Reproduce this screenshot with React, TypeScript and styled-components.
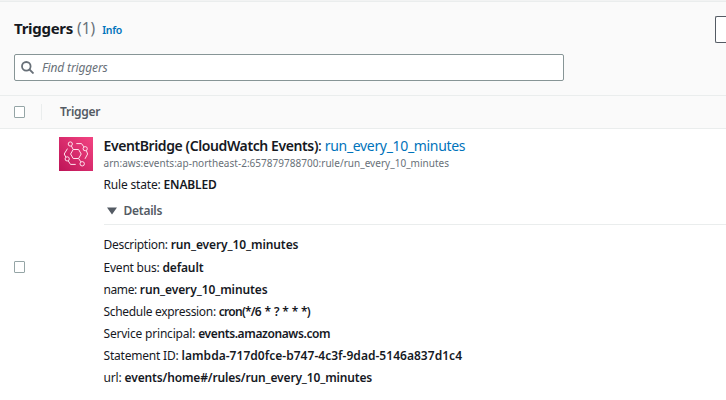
import React from 'react';
import styled, { createGlobalStyle } from 'styled-components';

const GlobalStyle = createGlobalStyle`
  * { box-sizing: border-box; }
  body { margin: 0; background: #fff; overflow: hidden; font-family: "Noto Sans", "Open Sans", sans-serif; font-size: 12px; color: #16191f; }
`;

const Page = styled.main`
  width: 726px;
  height: 400px;
  overflow: hidden;
  background: #fff;
`;

const Text = styled.span<{ $track?: number; $word?: number }>`
  letter-spacing: ${({ $track = 0 }) => $track}px;
  word-spacing: ${({ $word = 0 }) => $word}px;
  white-space: pre;
`;

const Header = styled.header`
  height: 96px;
  border-top: 1px solid #f2f3f3;
  border-bottom: 1px solid #eaeded;
  background: #fafafa;
  box-shadow: inset 0 1px 0 #eaeded;
  padding: 15px 0 0 14px;
`;

const TitleBar = styled.div`
  display: flex;
  justify-content: space-between;
  align-items: flex-start;
  height: 38px;
`;

const Heading = styled.h2`
  display: flex;
  align-items: baseline;
  margin: 0;
  font-size: 15px;
  line-height: 24px;
  font-weight: 700;
`;

const Counter = styled(Text)`
  margin-left: 4px;
  color: #687078;
  font-size: 15.5px;
  font-weight: 400;
`;

const InfoLink = styled(Text)`
  margin-left: 7px;
  color: #0073bb;
  font-size: 10.5px;
  font-weight: 600;
`;

const ActionButton = styled.button`
  width: 11px;
  height: 27px;
  padding: 0;
  border: 1px solid #545b64;
  border-right: 0;
  border-radius: 2px 0 0 2px;
  background: #fff;
`;

const SearchField = styled.div`
  display: flex;
  align-items: center;
  width: 550px;
  height: 27px;
  padding-left: 6px;
  gap: 8px;
  border: 1px solid #879596;
  border-radius: 2px;
  background: #fff;
  color: #687078;
  font-style: italic;
`;

const ColumnRow = styled.div`
  display: flex;
  align-items: center;
  height: 33px;
  padding-left: 14px;
  border-bottom: 1px solid #eaeded;
  background: #fafafa;
  color: #545b64;
  font-weight: 600;
`;

const ColumnLabel = styled(Text)`
  padding-bottom: 2px;
`;

const Checkbox = styled.span`
  flex: none;
  width: 11px;
  height: 12px;
  border: 1px solid #95a5a6;
  border-radius: 1px;
  background: #fff;
`;

const ColumnDivider = styled.span`
  width: 1px;
  height: 16px;
  margin: 0 18px 0 16px;
  background: #eaeded;
`;

const TriggerRow = styled.section`
  display: flex;
  height: 271px;
  padding: 8px 0 0 14px;
`;

const SelectCell = styled.div`
  width: 45px;
  padding-top: 124px;
  display: flex;
`;

const IconCell = styled.div`
  width: 44.5px;
  svg { display: block; }
`;

const Content = styled.div`
  flex: 1;
  min-width: 0;
`;

const Name = styled.div`
  font-size: 14px;
  line-height: 17px;
  height: 18px;
  white-space: nowrap;
  strong { font-weight: 600; }
  a { color: #0073bb; margin-left: 3px; }
`;

const Arn = styled.div`
  height: 18px;
  font-size: 10px;
  line-height: 17px;
  color: #687078;
`;

const Field = styled.div<{ $height?: number }>`
  height: ${({ $height = 22 }) => $height}px;
  line-height: 23px;
  white-space: nowrap;
`;

const Value = styled(Text)`
  margin-left: 3px;
  font-weight: 600;
`;

const Details = styled.div`
  display: flex;
  align-items: center;
  gap: 7px;
  height: 28px;
  margin-bottom: 8px;
  padding: 0 0 0 3px;
  border-bottom: 1px solid #eaeded;
  color: #545b64;
  font-weight: 600;
`;

const fields = [
  { label: 'Description:', labelTrack: -0.3, value: 'run_every_10_minutes', track: -0.1, height: 23 },
  { label: 'Event bus:', labelTrack: -0.22, value: 'default', track: -0.15 },
  { label: 'name:', labelTrack: -0.4, value: 'run_every_10_minutes', track: -0.1 },
  { label: 'Schedule expression:', labelTrack: -0.31, value: 'cron(*/6 * ? * * *)', track: -0.75, word: 1.2 },
  { label: 'Service principal:', labelTrack: -0.2, value: 'events.amazonaws.com', track: -0.385 },
  { label: 'Statement ID:', labelTrack: -0.2, value: 'lambda-717d0fce-b747-4c3f-9dad-5146a837d1c4', track: 0.03 },
  { label: 'url:', labelTrack: -0.15, value: 'events/home#/rules/run_every_10_minutes', track: -0.15 },
];

const SearchIcon = () => (
  <svg width="13" height="13" viewBox="0 0 13 13" fill="none" stroke="#687078" strokeWidth="1.8">
    <circle cx="5.3" cy="5.3" r="4.3" />
    <path d="m8.5 8.5 4 4" />
  </svg>
);

const EventBridgeIcon = () => (
  <svg width="34" height="34" viewBox="0 0 34 34" fill="none" stroke="#ffe3ee" strokeWidth="1">
    <defs>
      <linearGradient id="eventbridge" x1="0" y1="34" x2="34" y2="0" gradientUnits="userSpaceOnUse">
        <stop stopColor="#bd1457" />
        <stop offset="1" stopColor="#f34482" />
      </linearGradient>
    </defs>
    <path fill="url(#eventbridge)" stroke="none" d="M0 0h34v34H0z" />
    <path d="M14.2 12.5h5.4l2.6 4.5-2.6 4.5h-5.4L11.6 17z" />
    <path d="m12.4 9 1.8 3.5M19.6 21.5l2.3 3.4" />
    <circle cx="11.3" cy="7" r="2.1" />
    <circle cx="23.2" cy="26.8" r="2.2" />
    <circle cx="26.2" cy="11.7" r="2.1" />
    <circle cx="8.2" cy="21.9" r="2.1" />
    <path d="M17.3 6.6h5.2l2.4 3.3M27.3 13.6l1.3 3.4-2.6 4.8M16.7 27.4h-5.2L9.2 23.8M6.9 20.2 5.2 17l3.3-5.4" />
  </svg>
);

export default function App() {
  return (
    <>
      <GlobalStyle />
      <Page>
        <Header>
          <TitleBar>
            <Heading>
              <Text $track={-0.28}>Triggers</Text>
              <Counter>(1)</Counter>
              <InfoLink $track={-0.3}>Info</InfoLink>
            </Heading>
            <ActionButton aria-label="Action" />
          </TitleBar>
          <SearchField>
            <SearchIcon />
            <Text $track={-0.15}>Find triggers</Text>
          </SearchField>
        </Header>
        <ColumnRow>
          <Checkbox />
          <ColumnDivider />
          <ColumnLabel $track={-0.26}>Trigger</ColumnLabel>
        </ColumnRow>
        <TriggerRow>
          <SelectCell><Checkbox /></SelectCell>
          <IconCell><EventBridgeIcon /></IconCell>
          <Content>
            <Name>
              <Text as="strong" $track={-0.4}>EventBridge (CloudWatch Events)</Text>:
              <Text as="a" $track={-0.33}>run_every_10_minutes</Text>
            </Name>
            <Arn><Text $track={0.025}>arn:aws:events:ap-northeast-2:657879788700:rule/run_every_10_minutes</Text></Arn>
            <Field $height={24}>
              <Text $track={-0.18}>Rule state:</Text>
              <Value $track={-0.15}>ENABLED</Value>
            </Field>
            <Details>
              <svg width="10" height="8" viewBox="0 0 10 8"><path d="M0 .5h10L5 7.5z" fill="#545b64" /></svg>
              <Text $track={-0.25}>Details</Text>
            </Details>
            {fields.map((f) => (
              <Field key={f.label} $height={f.height}>
                <Text $track={f.labelTrack}>{f.label}</Text>
                <Value $track={f.track} $word={f.word}>{f.value}</Value>
              </Field>
            ))}
          </Content>
        </TriggerRow>
      </Page>
    </>
  );
}
